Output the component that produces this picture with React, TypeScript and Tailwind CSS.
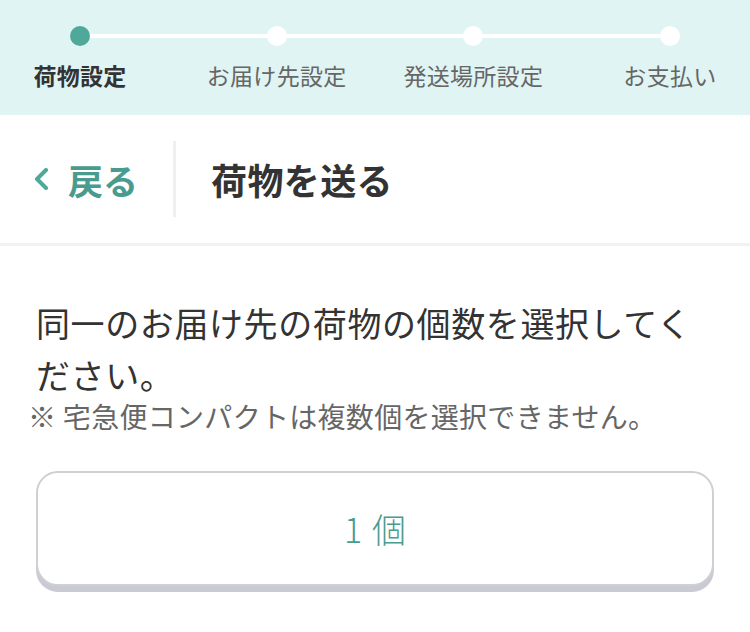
const steps = [
  { label: '荷物設定', active: true },
  { label: 'お届け先設定', active: false },
  { label: '発送場所設定', active: false },
  { label: 'お支払い', active: false },
];

const font = { fontFamily: '"Noto Sans CJK JP", "Noto Sans", sans-serif' };

function Stepper() {
  return (
    <div className="relative h-[115px] bg-[#e0f4f3]">
      {/* connecting line behind the dots */}
      <div className="absolute left-[80px] right-[80px] top-[34px] h-[4px] bg-white" />
      <div className="relative flex justify-between">
        {steps.map((s) => (
          <div key={s.label} className="flex w-[160px] flex-col items-center pt-[26px]">
            <span
              className={
                'block h-[20px] w-[20px] rounded-full ' + (s.active ? 'bg-[#4fa99b]' : 'bg-white')
              }
            />
            <span
              className={
                'mt-[14px] whitespace-nowrap text-[23px] leading-[30px] tracking-[0.3px] ' +
                (s.active ? 'font-bold text-[#333]' : 'text-[#666]')
              }
            >
              {s.label}
            </span>
          </div>
        ))}
      </div>
    </div>
  );
}

function NavBar() {
  return (
    <div className="flex h-[131px] items-center border-b-[3px] border-[#f1f2f2] bg-white">
      <button className="flex items-center pl-[34px] pr-[35px] text-[#4a9b8f]">
        <svg width="16" height="22" viewBox="0 0 16 22" className="mr-[18px]">
          <polyline
            points="12,2 3,11 12,20"
            fill="none"
            stroke="#4fa99b"
            strokeWidth="4"
            strokeLinecap="round"
            strokeLinejoin="round"
          />
        </svg>
        <span className="text-[35px] font-bold leading-none">戻る</span>
      </button>
      <div className="h-[76px] w-[3px] bg-[#eff1f1]" />
      <h1 className="pl-[35px] text-[36px] font-bold leading-none tracking-[0.4px] text-[#333]">
        荷物を送る
      </h1>
    </div>
  );
}

export default function App() {
  return (
    <div className="min-h-[632px] w-[750px] bg-white" style={font}>
      <Stepper />
      <NavBar />
      <div className="px-[36px] pt-[51px]">
        <p className="pr-[20px] text-[34px] leading-[52px] tracking-[0.6px] text-[#333]">
          同一のお届け先の荷物の個数を選択してください。
        </p>
        <p className="-ml-[8px] text-[28px] leading-[30px] tracking-[0.3px] text-[#666]">
          ※ 宅急便コンパクトは複数個を選択できません。
        </p>
        <button className="mt-[40px] flex h-[115px] w-full items-center justify-center rounded-[22px] border-2 border-[#cfd0d4] bg-white shadow-[0_6px_0_#c9cad3]">
          <span className="text-[34px] font-light leading-none text-[#4a9b8f]">
            1<span className="ml-[10px]">個</span>
          </span>
        </button>
      </div>
    </div>
  );
}
